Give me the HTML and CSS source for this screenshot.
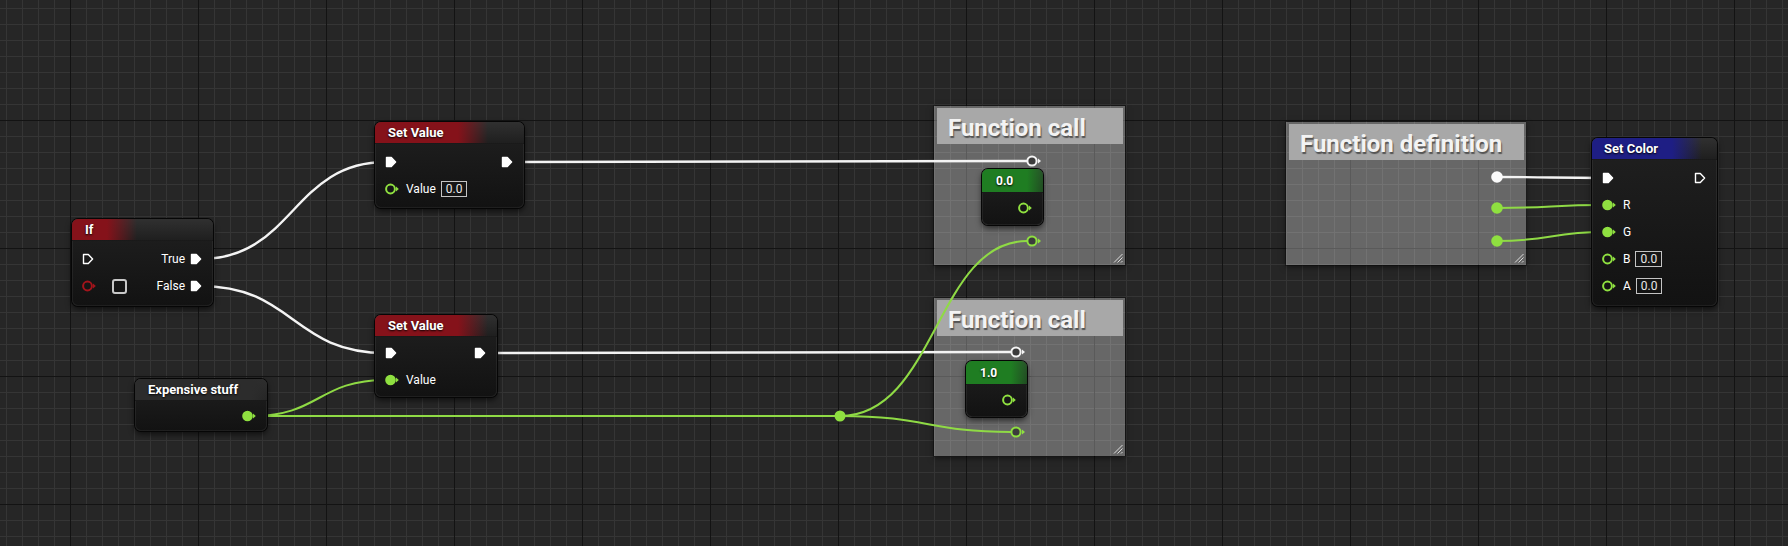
FILE: index.html
```html
<!DOCTYPE html>
<html>
<head>
    <meta charset="utf-8">
    <link rel="stylesheet" href="styles.css">
</head>
<body>
<svg class="defs" width="0" height="0">
  <defs>
    <symbol id="execFill" viewBox="0 0 12 12"><path d="M1.5 1.5H6.3L10.6 6L6.3 10.5H1.5Z" fill="#fff" stroke="#fff" stroke-width="1.4" stroke-linejoin="round"/></symbol>
    <symbol id="execLine" viewBox="0 0 12 12"><path d="M1.5 1.5H6.3L10.6 6L6.3 10.5H1.5Z" fill="none" stroke="#fff" stroke-width="1.4" stroke-linejoin="round"/></symbol>
    <symbol id="dataFill" viewBox="0 0 15 12"><circle cx="5.5" cy="6" r="5.3" fill="currentColor"/><path d="M11 3.6L13.8 6L11 8.4Z" fill="currentColor"/></symbol>
    <symbol id="dataLine" viewBox="0 0 15 12"><circle cx="5.5" cy="6" r="4.4" fill="none" stroke="currentColor" stroke-width="2"/><path d="M11 3.6L13.8 6L11 8.4Z" fill="currentColor"/></symbol>
  </defs>
</svg>

<div id="graph">
  <!-- comment boxes -->
  <div class="comment" id="callA">
    <div class="comment-head">Function call</div>
    <svg class="grip" width="12" height="12"><path d="M11.5 3L3 11.5M11.5 6.5L6.5 11.5M11.5 10L10 11.5" stroke="#dcdcdc" stroke-width="1"/></svg>
  </div>
  <div class="comment" id="callB">
    <div class="comment-head">Function call</div>
    <svg class="grip" width="12" height="12"><path d="M11.5 3L3 11.5M11.5 6.5L6.5 11.5M11.5 10L10 11.5" stroke="#dcdcdc" stroke-width="1"/></svg>
  </div>
  <div class="comment" id="funcDef">
    <div class="comment-head">Function definition</div>
    <svg class="grip" width="12" height="12"><path d="M11.5 3L3 11.5M11.5 6.5L6.5 11.5M11.5 10L10 11.5" stroke="#dcdcdc" stroke-width="1"/></svg>
  </div>

  <!-- wires -->
  <svg class="wires" width="1788" height="546">
    <g fill="none" stroke="#f4f4f4" stroke-width="2.4">
      <path d="M200 259C294 259 292 162 386 162"/>
      <path d="M200 286C294 286 292 353 386 353"/>
      <path d="M512 162C770 162 770 161 1027 161"/>
      <path d="M485 353C750 353 750 352 1011 352"/>
      <path d="M1497 177C1550 177 1552 178 1604 178"/>
    </g>
    <g fill="none" stroke="#8fda45" stroke-width="2">
      <path d="M252 416C320 416 318 380 386 380"/>
      <path d="M252 416L840 416"/>
      <path d="M840 416C936 416 936 241 1027 241"/>
      <path d="M840 416C928 416 928 432 1011 432"/>
      <path d="M1497 208C1550 208 1552 205 1604 205"/>
      <path d="M1497 241C1550 241 1552 232 1604 232"/>
    </g>
    <!-- reroute pins -->
    <g stroke-width="2">
      <circle cx="1032" cy="161" r="4.6" fill="#3c3c3c" stroke="#f4f4f4"/>
      <path d="M1038 158.5L1041 161L1038 163.5Z" fill="#f4f4f4"/>
      <circle cx="1032" cy="241" r="4.6" fill="#3c3c3c" stroke="#8fe040"/>
      <path d="M1038 238.5L1041 241L1038 243.5Z" fill="#8fe040"/>
      <circle cx="1016" cy="352" r="4.6" fill="#3c3c3c" stroke="#f4f4f4"/>
      <path d="M1022 349.5L1025 352L1022 354.5Z" fill="#f4f4f4"/>
      <circle cx="1016" cy="432" r="4.6" fill="#3c3c3c" stroke="#8fe040"/>
      <path d="M1022 429.5L1025 432L1022 434.5Z" fill="#8fe040"/>
    </g>
    <circle cx="840" cy="416" r="5.5" fill="#8fe040"/>
    <circle cx="1497" cy="177" r="5.8" fill="#fafafa"/>
    <circle cx="1497" cy="208" r="5.8" fill="#8fe040"/>
    <circle cx="1497" cy="241" r="5.8" fill="#8fe040"/>
  </svg>

  <!-- nodes -->
  <div class="node" id="ifNode">
    <div class="node-head"><span class="title red">If</span></div>
    <div class="node-body">
      <div class="row">
        <svg class="pin" width="12" height="12"><use href="#execLine"/></svg>
        <span class="out">True <svg class="pin" width="12" height="12"><use href="#execFill"/></svg></span>
      </div>
      <div class="row">
        <svg class="pin bool" width="15" height="12"><use href="#dataLine"/></svg>
        <span class="check"></span>
        <span class="out">False <svg class="pin" width="12" height="12"><use href="#execFill"/></svg></span>
      </div>
    </div>
  </div>

  <div class="node" id="setA">
    <div class="node-head"><span class="title red">Set Value</span></div>
    <div class="node-body">
      <div class="row">
        <svg class="pin" width="12" height="12"><use href="#execFill"/></svg>
        <span class="out"><svg class="pin" width="12" height="12"><use href="#execFill"/></svg></span>
      </div>
      <div class="row">
        <svg class="pin float" width="15" height="12"><use href="#dataLine"/></svg>
        <span class="label">Value</span>
        <span class="val">0.0</span>
      </div>
    </div>
  </div>

  <div class="node" id="setB">
    <div class="node-head"><span class="title red">Set Value</span></div>
    <div class="node-body">
      <div class="row">
        <svg class="pin" width="12" height="12"><use href="#execFill"/></svg>
        <span class="out"><svg class="pin" width="12" height="12"><use href="#execFill"/></svg></span>
      </div>
      <div class="row">
        <svg class="pin float" width="15" height="12"><use href="#dataFill"/></svg>
        <span class="label">Value</span>
      </div>
    </div>
  </div>

  <div class="node" id="expensive">
    <div class="node-head"><span class="title gray">Expensive stuff</span></div>
    <div class="node-body">
      <div class="row">
        <span class="out"><svg class="pin float" width="15" height="12"><use href="#dataFill"/></svg></span>
      </div>
    </div>
  </div>

  <div class="node literal" id="litA">
    <div class="node-head"><span class="title green">0.0</span></div>
    <div class="node-body">
      <div class="row">
        <span class="out"><svg class="pin float" width="15" height="12"><use href="#dataLine"/></svg></span>
      </div>
    </div>
  </div>

  <div class="node literal" id="litB">
    <div class="node-head"><span class="title green">1.0</span></div>
    <div class="node-body">
      <div class="row">
        <span class="out"><svg class="pin float" width="15" height="12"><use href="#dataLine"/></svg></span>
      </div>
    </div>
  </div>

  <div class="node" id="setColor">
    <div class="node-head"><span class="title blue">Set Color</span></div>
    <div class="node-body">
      <div class="row">
        <svg class="pin" width="12" height="12"><use href="#execFill"/></svg>
        <span class="out"><svg class="pin" width="12" height="12"><use href="#execLine"/></svg></span>
      </div>
      <div class="row">
        <svg class="pin float" width="15" height="12"><use href="#dataFill"/></svg>
        <span class="label">R</span>
      </div>
      <div class="row">
        <svg class="pin float" width="15" height="12"><use href="#dataFill"/></svg>
        <span class="label">G</span>
      </div>
      <div class="row">
        <svg class="pin float" width="15" height="12"><use href="#dataLine"/></svg>
        <span class="label">B</span>
        <span class="val">0.0</span>
      </div>
      <div class="row">
        <svg class="pin float" width="15" height="12"><use href="#dataLine"/></svg>
        <span class="label">A</span>
        <span class="val">0.0</span>
      </div>
    </div>
  </div>
</div>
</body>
</html>
```

FILE: styles.css
```css
* {
  box-sizing: border-box;
}
body {
  margin: 0;
  background: #262626;
  font-family: Roboto, "Liberation Sans", Arial, sans-serif;
  color: #fff;
  overflow: hidden;
}
.defs {
  position: absolute;
}
#graph {
  position: relative;
  width: 1788px;
  height: 546px;
  background-color: #262626;
  background-image:
    linear-gradient(to right, #131313 1px, transparent 1px),
    linear-gradient(to bottom, #131313 1px, transparent 1px),
    linear-gradient(to right, #353535 1px, transparent 1px),
    linear-gradient(to bottom, #353535 1px, transparent 1px);
  background-size: 128px 100%, 100% 128px, 16px 100%, 100% 16px;
  background-position: 70px 0, 0 120px, 6px 0, 0 8px;
}

/* comments */
.comment {
  position: absolute;
  background: rgba(255, 255, 255, 0.3);
  box-shadow: 0 0 0 1px rgba(0, 0, 0, 0.3), 0 2px 6px rgba(0, 0, 0, 0.55);
}
.comment-head {
  margin: 2px 2px 0 3px;
  height: 36px;
  padding: 4px 0 0 11px;
  display: flex;
  align-items: center;
  background: #a8a8a8;
  color: #f3f3f3;
  font-size: 24px;
  font-weight: 700;
  white-space: nowrap;
  text-shadow: 1px 2px 1px rgba(0, 0, 0, 0.5);
}
.grip {
  position: absolute;
  right: 2px;
  bottom: 2px;
}
#callA {
  left: 934px;
  top: 106px;
  width: 191px;
  height: 159px;
}
#callB {
  left: 934px;
  top: 298px;
  width: 191px;
  height: 158px;
}
#funcDef {
  left: 1286px;
  top: 122px;
  width: 240px;
  height: 143px;
}

.wires {
  position: absolute;
  left: 0;
  top: 0;
}

/* nodes */
.node {
  position: absolute;
  border-radius: 6px;
  overflow: hidden;
  background: linear-gradient(#202020, #121212);
  box-shadow: 0 0 0 1px #060606, 0 3px 6px rgba(0, 0, 0, 0.65), inset 0 0 0 1px rgba(255, 255, 255, 0.06);
}
.node-head {
  height: 22px;
  display: flex;
  background: linear-gradient(#303030, #1f1f1f);
  border-bottom: 1px solid rgba(0, 0, 0, 0.45);
}
.title {
  display: flex;
  align-items: center;
  padding: 0 44px 0 13px;
  font-size: 13px;
  font-weight: 700;
  white-space: nowrap;
  text-shadow: 0 1px 2px #000;
  background: linear-gradient(to right, var(--hc) calc(100% - 30px), transparent);
}
.red {
  --hc: #85121a;
}
.blue {
  --hc: #1e1e84;
}
.green {
  --hc: #1f7d22;
}
.gray {
  --hc: #2c2c2c;
}
.node-body {
  padding: 7px 11px 0 10px;
  display: flex;
  flex-direction: column;
  gap: 5px;
}
.row {
  height: 22px;
  display: flex;
  align-items: center;
  font-size: 12px;
}
.out {
  margin-left: auto;
  display: flex;
  align-items: center;
  gap: 5px;
}
.pin {
  display: block;
  flex: none;
}
.float {
  color: #8fe040;
}
.bool {
  color: #a3141b;
}
.label {
  margin-left: 6px;
}
.val {
  margin-left: 5px;
  height: 16px;
  padding: 0 4px;
  border: 1px solid #c4c4c4;
  line-height: 14px;
  font-size: 12px;
  color: #e8e8e8;
}
.check {
  width: 15px;
  height: 15px;
  margin-left: 15px;
  border: 2px solid #c8c8c8;
  border-radius: 3px;
}

#ifNode {
  left: 72px;
  top: 219px;
  width: 141px;
  height: 87px;
}
#setA {
  left: 375px;
  top: 122px;
  width: 149px;
  height: 86px;
}
#setB {
  left: 375px;
  top: 315px;
  width: 122px;
  height: 82px;
}
#setB .node-body {
  padding-top: 5px;
}
#expensive {
  left: 135px;
  top: 379px;
  width: 132px;
  height: 52px;
}
#expensive .node-body,
.literal .node-body {
  padding: 4px 10px 0 10px;
}
.literal .node-head {
  height: 24px;
}
.literal .title {
  padding-left: 14px;
  font-size: 12px;
}
#litA {
  left: 982px;
  top: 169px;
  width: 61px;
  height: 56px;
}
#litB {
  left: 966px;
  top: 361px;
  width: 61px;
  height: 56px;
}
#setColor {
  left: 1592px;
  top: 138px;
  width: 125px;
  height: 168px;
}
#setColor .title {
  padding-left: 12px;
}
```
